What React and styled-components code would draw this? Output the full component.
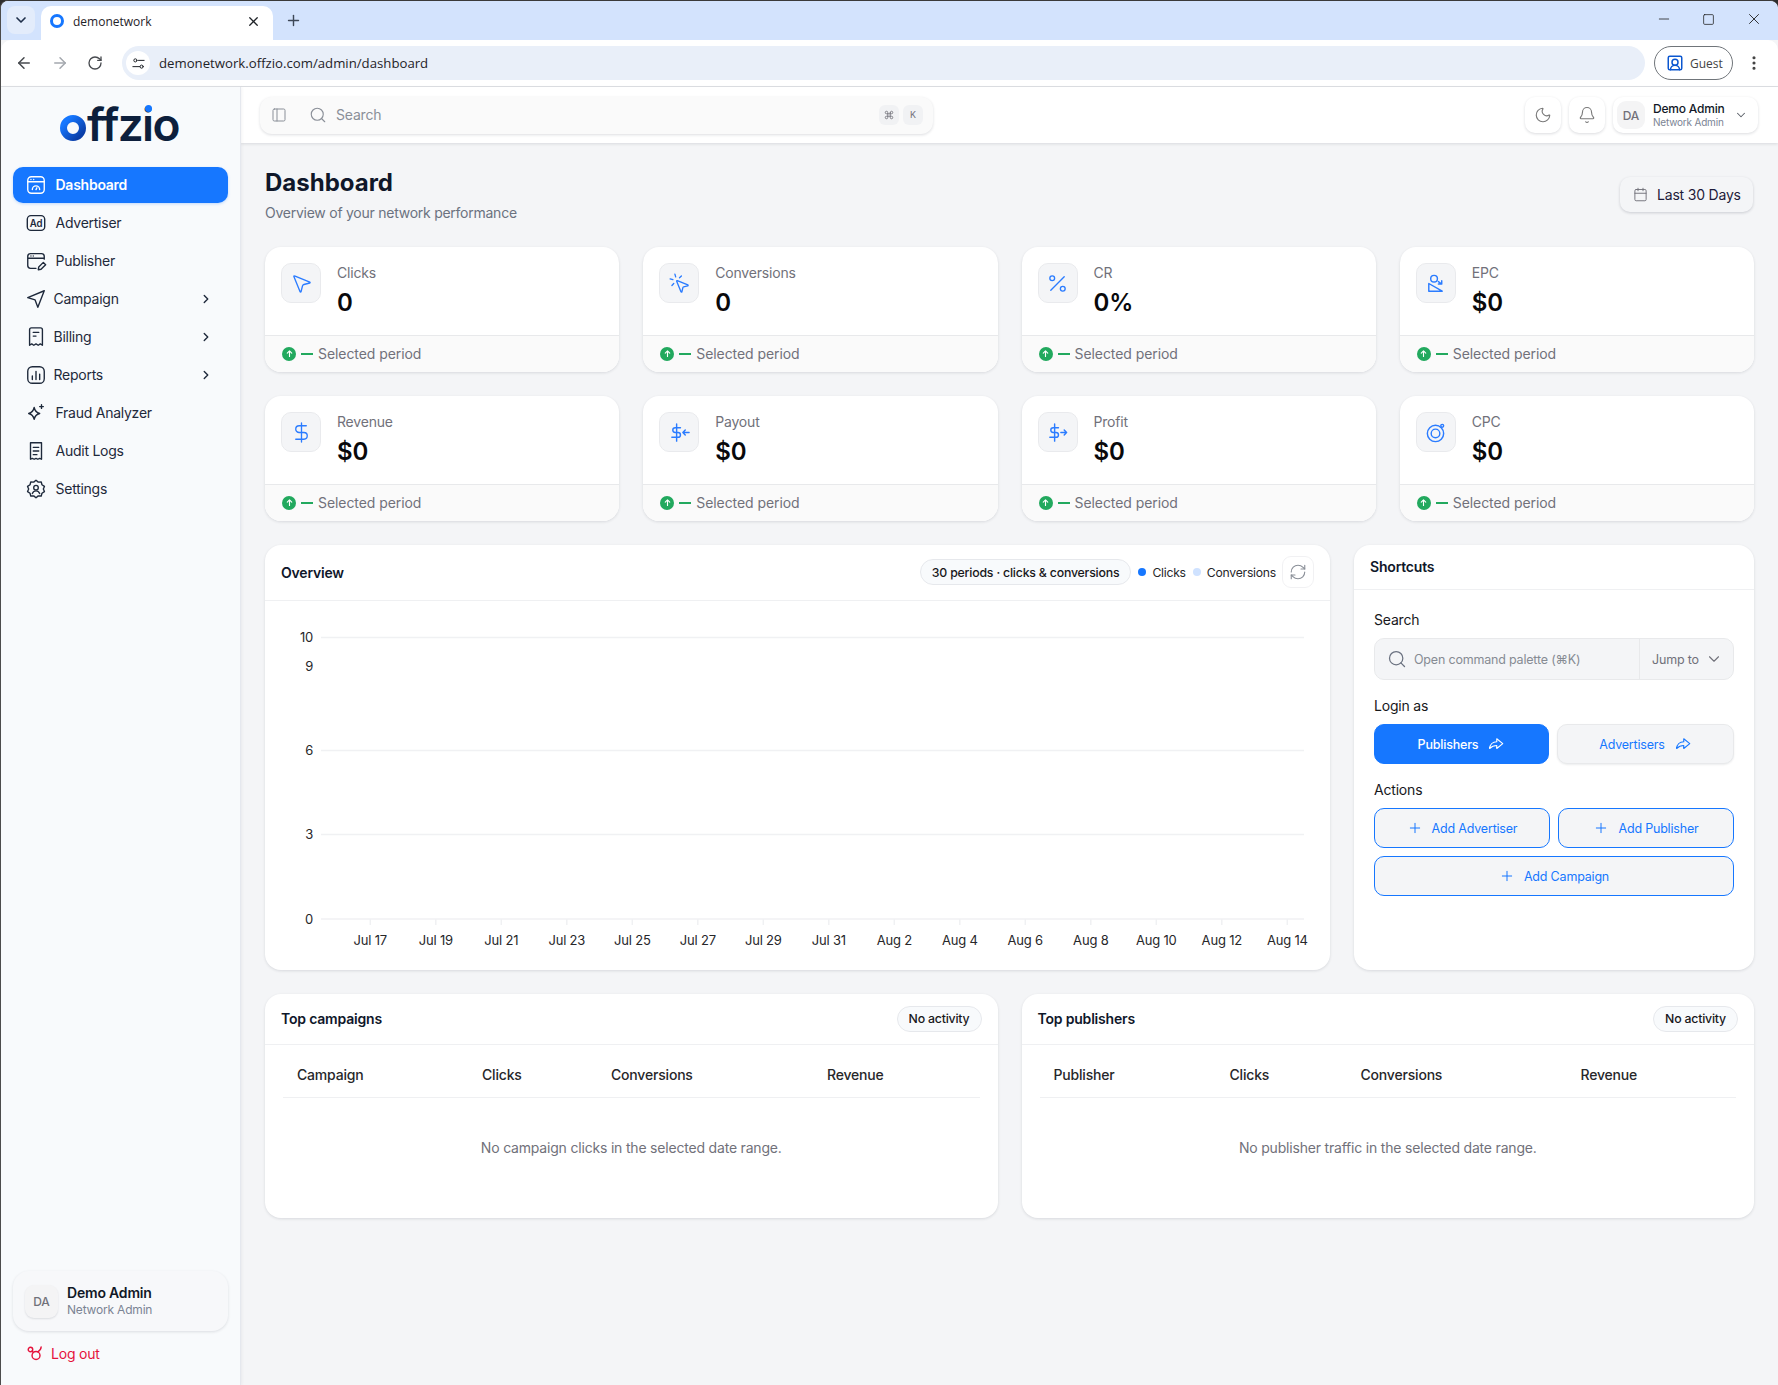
import React from "react";
import styled, { createGlobalStyle } from "styled-components";
import {
  ArrowLeft, ArrowRight, Bell, Calendar, ChevronDown, ChevronRight, Command, DollarSign,
  EllipsisVertical, Minus, MousePointer2, MousePointerClick, Moon, PanelLeft, Percent,
  Plus, RefreshCw, RotateCw, Search, Square, UserSquare2, X,
} from "lucide-react";

const Global = createGlobalStyle`
  html, body { margin: 0; padding: 0; background: #2e2e2e; }
  body { font-family: Inter, "Liberation Sans", sans-serif; color: #0f172a; letter-spacing: -0.012em; }
  * { box-sizing: border-box; }
`;

const Icon = ({ size = 20, width = 1.5, children }) => (
  <svg width={size} height={size} viewBox="0 0 24 24" fill="none" stroke="currentColor" strokeWidth={width} strokeLinecap="round" strokeLinejoin="round">
    {children}
  </svg>
);

const DashIcon = () => <Icon><rect x="3" y="3" width="18" height="18" rx="4" /><path d="M3 8.5h18M6.5 6h.01M9.5 6h.01M8 17a4 4 0 0 1 8 0M12 17l1-2" /></Icon>;
const AdIcon = () => (
  <Icon>
    <rect x="2.5" y="4" width="19" height="16" rx="4" />
    <text x="12" y="16" textAnchor="middle" fontSize="10.5" fontWeight="600" fill="currentColor" stroke="none" fontFamily="Inter, sans-serif">Ad</text>
  </Icon>
);
const PubIcon = () => <Icon><path d="M21 10V7a3 3 0 0 0-3-3H6a3 3 0 0 0-3 3v10a3 3 0 0 0 3 3h6M3 9h18M6.5 6.5h.01M9 6.500h.01M14.500 21.500l.5-3 5-5 2.500 2.500-5 5z" /></Icon>;
const PlaneIcon = () => <Icon><path d="M21 3 3 10.500l8 2.500 3 8z" /></Icon>;
const BillIcon = () => <Icon><path d="M5 4a2 2 0 0 1 2-2h10a2 2 0 0 1 2 2v17l-2.300-1.500-2.300 1.500-2.400-1.500-2.400 1.500-2.300-1.500L5 21zM9 7h6M9 11h3" /></Icon>;
const ChartIcon = () => <Icon><rect x="3" y="3" width="18" height="18" rx="5" /><path d="M8 17v-4M12 17V8M16 17v-6" /></Icon>;
const SparkIcon = () => <Icon><path d="M10 6c.8 4 2 5.500 6 6.500-4 1-5.200 2.500-6 6.500-.8-4-2-5.500-6-6.500 4-1 5.200-2.500 6-6.500zM18 3v4M16 5h4" /></Icon>;
const LogIcon = () => <Icon><path d="M6 3h12v18l-2-1-2 1-2-1-2 1-2-1-2 1zM9 8h6M9 12h6M9 16h4" /></Icon>;
const GearIcon = () => <Icon><path d="m12 2.500 2.500 2 3.200-.2.8 3.100 2.700 1.800-1.200 2.800 1.200 2.800-2.700 1.800-.8 3.100-3.200-.2-2.500 2-2.500-2-3.200.2-.8-3.100-2.700-1.800 1.200-2.800-1.200-2.800 2.700-1.800.8-3.100 3.200.2zM8 17c.8-2 2.200-3 4-3s3.200 1 4 3" /><circle cx="12" cy="10.500" r="2.500" /></Icon>;
const LogoutIcon = () => <Icon size={18} width={1.9}><circle cx="7.300" cy="7.300" r="3" /><circle cx="14.700" cy="15.300" r="5.300" /><path d="m9.500 9.500 1.800 1.800M21.500 4c-.2 3-1.800 5-4.300 6.500" /></Icon>;
const EpcIcon = () => <Icon><circle cx="10.500" cy="7" r="3.500" /><path d="M5 12v8h14L5 12zM15 10l3.500 2.500M18.500 9v3.500H15" /></Icon>;
const PayoutIcon = () => <Icon><path d="M9 3v18M13 7H7.500a2.500 2.500 0 0 0 0 5h3a2.500 2.500 0 0 1 0 5H4M22 12h-6M18 9.500 15.500 12l2.500 2.500" /></Icon>;
const ProfitIcon = () => <Icon><path d="M9 3v18M13 7H7.500a2.500 2.500 0 0 0 0 5h3a2.500 2.500 0 0 1 0 5H4M15.500 12h6M19 9.500l2.500 2.500-2.500 2.500" /></Icon>;
const CpcIcon = () => <Icon><circle cx="12" cy="13" r="8.500" /><circle cx="12" cy="13" r="4.500" /><circle cx="19" cy="5" r="1.500" /></Icon>;
const ForwardIcon = () => <Icon size={18}><path d="m13 5 8 6.500-8 6.500v-4c-4 0-7 1.500-9.500 4 .5-5 4-9 9.500-9z" /></Icon>;
const TuneIcon = () => <Icon size={15} width={1.6}><circle cx="7" cy="7" r="2.500" /><circle cx="17" cy="17" r="2.500" /><path d="M12 7h9M3 17h11" /></Icon>;
const LogoRing = () => (
  <svg width="26" height="26" viewBox="0 0 26 26" fill="none">
    <defs>
      <linearGradient id="logoRing" x1="0" y1="0" x2="1" y2="1">
        <stop offset="0.15" stopColor="#1677ff" />
        <stop offset="0.9" stopColor="#0a3ea8" />
      </linearGradient>
    </defs>
    <circle cx="13" cy="13" r="9.500" stroke="url(#logoRing)" strokeWidth="7" />
  </svg>
);

const Window = styled.div`
  width: 100%;
  height: 100vh;
  display: flex;
  flex-direction: column;
  border-top: 1px solid #3a3a3a;
  border-left: 1px solid #4c4c4c;
  border-radius: 8px 8px 0 0;
  overflow: hidden;
  background: #f4f5f7;
`;

const Strip = styled.div`
  height: 39px;
  flex: none;
  background: #d3e3fd;
  display: flex;
  align-items: flex-end;
  padding-left: 6px;
  font-family: "Open Sans", sans-serif;
  letter-spacing: 0;
`;

const TabMenu = styled.div`
  width: 28px;
  height: 28px;
  margin-bottom: 6px;
  border-radius: 8px;
  background: #e3ecfb;
  display: flex;
  align-items: center;
  justify-content: center;
  color: #1f2f4a;
`;

const Tab = styled.div`
  width: 232px;
  height: 34px;
  margin-left: 6px;
  padding: 0 12px 4px 9px;
  background: #fff;
  border-radius: 10px 10px 0 0;
  display: flex;
  align-items: center;
  gap: 9px;
  font-size: 12px;
  color: #1f2328;
  span { flex: 1; }
`;

const Favicon = styled.i`
  width: 14px;
  height: 14px;
  border-radius: 50%;
  border: 3.500px solid #1677ff;
`;

const NewTab = styled.div`
  margin: 0 0 11px 12px;
  color: #3d4757;
  display: flex;
`;

const WinControls = styled.div`
  margin-left: auto;
  height: 100%;
  display: flex;
  align-items: center;
  color: #1f1f1f;
  gap: 30px;
  padding: 0 15px 3px 0;
  svg { display: block; }
`;

const Toolbar = styled.div`
  height: 47px;
  flex: none;
  background: #fff;
  border-bottom: 1px solid #dfe1e5;
  border-radius: 10px 10px 0 0;
  display: flex;
  align-items: center;
  padding: 0 15px 0 14px;
  font-family: "Open Sans", sans-serif;
  letter-spacing: 0;
`;

const NavBtn = styled.div`
  width: 36px;
  display: flex;
  color: ${(p) => (p.$off ? "#a4a8ae" : "#474a4f")};
`;

const Address = styled.div`
  flex: 1;
  height: 34px;
  margin-left: -1px;
  border-radius: 17px;
  background: #e9eff9;
  display: flex;
  align-items: center;
  padding-left: 4px;
  font-size: 13.200px;
  color: #1f2328;
`;

const SiteBtn = styled.div`
  width: 24px;
  height: 24px;
  border-radius: 50%;
  background: #fff;
  display: flex;
  align-items: center;
  justify-content: center;
  margin-right: 9px;
`;

const Guest = styled.div`
  width: 79px;
  height: 34px;
  margin-left: 9px;
  border: 1px solid #70757a;
  border-radius: 17px;
  display: flex;
  align-items: center;
  gap: 6px;
  padding-left: 11px;
  font-size: 12px;
  color: #444;
  svg { color: #0b57d0; }
`;

const Dots = styled.div`
  margin: 0 0 0 12px;
  display: flex;
  color: #444;
`;

const Body = styled.div`
  flex: 1;
  min-height: 0;
  display: flex;
`;

const Sidebar = styled.aside`
  width: 240px;
  flex: none;
  background: #f8fafc;
  border-right: 1px solid #e5e8ee;
  box-shadow: 1px 0 3px rgba(15, 23, 42, 0.05);
  display: flex;
  flex-direction: column;
  padding: 0 12px 19px;
  z-index: 2;
`;

const LogoWrap = styled.div`
  height: 80px;
  flex: none;
  display: flex;
  align-items: center;
  justify-content: center;
`;

const Logo = styled.div`
  position: relative;
  display: flex;
  align-items: baseline;
  gap: 1px;
  margin: -6px 0 0 -2px;
  font-size: 46px;
  line-height: 36px;
  font-weight: 600;
  letter-spacing: -0.035em;
  color: #0d1f3c;
  svg { flex: none; }
  i {
    position: absolute;
    right: 27px;
    top: -1px;
    width: 7px;
    height: 7px;
    border-radius: 50%;
    background: #1677ff;
  }
`;

const Nav = styled.nav`
  display: flex;
  flex-direction: column;
  gap: 2px;
`;

const NavItem = styled.div`
  height: 36px;
  border-radius: 10px;
  padding: 0 12px 1px;
  display: flex;
  align-items: center;
  gap: ${(p) => (p.$sub ? "6.500px" : "8.500px")};
  font-size: 14px;
  letter-spacing: -0.018em;
  font-weight: ${(p) => (p.$active ? 600 : 400)};
  background: ${(p) => (p.$active ? "#1677ff" : "transparent")};
  color: ${(p) => (p.$active ? "#fff" : "#1e293b")};
  box-shadow: ${(p) => (p.$active ? "0 1px 3px rgba(22,119,255,0.25)" : "none")};
  > svg:first-child { width: 22px; height: 22px; }
  > svg:last-child:not(:first-child) { margin-left: auto; margin-right: 3px; }
`;

const UserCard = styled.div`
  margin-top: auto;
  height: 60px;
  border-radius: 16px;
  background: #f7f8fa;
  box-shadow: 0 1px 3px rgba(15, 23, 42, 0.12);
  display: flex;
  align-items: center;
  gap: 9px;
  padding: 0 12px;
`;

const Avatar = styled.div`
  width: ${(p) => p.$size}px;
  height: ${(p) => p.$size}px;
  flex: none;
  border-radius: 9px;
  background: #f4f4f5;
  box-shadow: ${(p) => (p.$raised ? "0 1px 2px rgba(15,23,42,.12)" : "none")};
  display: flex;
  align-items: center;
  justify-content: center;
  font-size: 12px;
  font-weight: 500;
  color: #71717a;
`;

const UserName = styled.div`
  font-size: ${(p) => p.$size}px;
  line-height: 1.3;
  font-weight: ${(p) => (p.$bold ? 600 : 500)};
  color: #111827;
`;

const UserRole = styled.div`
  font-size: ${(p) => p.$size}px;
  line-height: 1.3;
  color: #7b8494;
`;

const Logout = styled.div`
  margin-top: 9px;
  height: 26px;
  padding-left: 12px;
  display: flex;
  align-items: center;
  gap: 8px;
  font-size: 14px;
  color: #e5133c;
`;

const Main = styled.main`
  flex: 1;
  min-width: 0;
  display: flex;
  flex-direction: column;
`;

const Topbar = styled.header`
  height: 56px;
  flex: none;
  background: #fff;
  box-shadow: 0 1px 3px rgba(15, 23, 42, 0.12);
  display: flex;
  align-items: center;
  padding: 0 20px 0 19px;
  gap: 8px;
`;

const SearchBar = styled.div`
  width: 673px;
  height: 37px;
  margin-right: auto;
  border-radius: 12px;
  background: #fafafa;
  box-shadow: 0 1px 3px rgba(15, 23, 42, 0.14);
  display: flex;
  align-items: center;
  padding: 0 10px 1px 11px;
  color: #8a8f98;
  font-size: 14px;
  > svg:nth-child(2) { margin: 0 9px 0 22px; }
  span { flex: 1; }
`;

const Kbd = styled.kbd`
  width: 20px;
  height: 20px;
  margin-left: 4px;
  border-radius: 6px;
  background: #f1f2f4;
  display: flex;
  align-items: center;
  justify-content: center;
  font-family: Inter, sans-serif;
  font-size: 9px;
  color: #71717a;
`;

const IconBtn = styled.div`
  width: 36px;
  height: 36px;
  border-radius: 10px;
  background: #fff;
  box-shadow: 0 1px 3px rgba(15, 23, 42, 0.15);
  display: flex;
  align-items: center;
  justify-content: center;
  color: #7a7a7a;
`;

const UserMenu = styled.div`
  width: 145px;
  height: 36px;
  border-radius: 10px;
  background: #fff;
  box-shadow: 0 1px 3px rgba(15, 23, 42, 0.15);
  display: flex;
  align-items: center;
  padding: 0 10px 0 4px;
  gap: 8px;
  color: #5b6068;
  > svg { margin-left: auto; }
`;

const Content = styled.div`
  flex: 1;
  padding: 24px 24px 0;
  display: flex;
  flex-direction: column;
  gap: 24px;
`;

const PageHead = styled.div`
  display: flex;
  justify-content: space-between;
  align-items: flex-start;
`;

const Title = styled.h1`
  margin: 0 0 4px;
  font-size: 24px;
  line-height: 32px;
  font-weight: 700;
  letter-spacing: 0;
  color: #0f172a;
`;

const Sub = styled.p`
  margin: 0;
  font-size: 14px;
  line-height: 20px;
  letter-spacing: -0.018em;
  color: #6b7280;
`;

const RangeBtn = styled.div`
  width: 133px;
  height: 35px;
  margin: 10px 1px 0 0;
  border-radius: 10px;
  background: #f4f5f7;
  box-shadow: 0 1px 3px rgba(15, 23, 42, 0.18);
  display: flex;
  align-items: center;
  gap: 9px;
  padding-left: 13px;
  font-size: 14px;
  color: #1e1b3a;
  svg { color: #71717a; }
`;

const StatGrid = styled.section`
  display: grid;
  grid-template-columns: repeat(4, 1fr);
  gap: 24px;
`;

const Card = styled.div`
  background: #fff;
  border-radius: 16px;
  box-shadow: 0 1px 3px rgba(15, 23, 42, 0.12);
  overflow: hidden;
`;

const StatBody = styled.div`
  height: 88px;
  padding: 16px;
  display: flex;
  gap: 16px;
`;

const StatIcon = styled.div`
  width: 40px;
  height: 40px;
  border-radius: 10px;
  background: #f4f5f7;
  border: 1px solid #e9eaed;
  display: flex;
  align-items: center;
  justify-content: center;
  color: #2b7cff;
  svg { width: 23px; height: 23px; }
`;

const StatLabel = styled.div`
  font-size: 14px;
  line-height: 20px;
  color: #71717a;
`;

const StatValue = styled.div`
  margin-top: 4px;
  font-size: 24px;
  line-height: 32px;
  font-weight: 600;
  letter-spacing: 0;
  color: #09090b;
`;

const StatFoot = styled.div`
  height: 37px;
  border-top: 1px solid #e8e9eb;
  background: #fafafa;
  padding: 0 17px 1px;
  display: flex;
  align-items: center;
  font-size: 14px;
  letter-spacing: -0.005em;
  color: #71717a;
`;

const UpDot = styled.i`
  width: 14px;
  height: 14px;
  border-radius: 50%;
  background: #22a95e;
  color: #fff;
  display: flex;
  align-items: center;
  justify-content: center;
`;

const Dash = styled.i`
  width: 12px;
  height: 2px;
  margin: 0 5px 0 5px;
  background: #22a95e;
`;

const MidRow = styled.section`
  display: grid;
  grid-template-columns: 1fr 400px;
  gap: 24px;
`;

const CardHead = styled.div`
  height: ${(p) => p.$h}px;
  border-bottom: 1px solid #eff0f2;
  padding: 0 16px 1px;
  display: flex;
  align-items: center;
  gap: 7px;
`;

const CardTitle = styled.h2`
  margin: 0 auto 0 0;
  font-size: 14px;
  font-weight: 600;
  color: #0f172a;
`;

const Pill = styled.div`
  height: 26px;
  padding: 0 11px;
  border: 1px solid #e6e8ec;
  border-radius: 13px;
  background: #f8fafc;
  display: flex;
  align-items: center;
  font-size: 12.300px;
  font-weight: 450;
  color: #18181b;
`;

const Legend = styled.div`
  display: flex;
  align-items: center;
  gap: 6px;
  font-size: 12.200px;
  letter-spacing: -0.02em;
  color: #27272a;
  &::before {
    content: "";
    width: 8px;
    height: 8px;
    border-radius: 50%;
    background: ${(p) => p.$color};
  }
`;

const RefreshBtn = styled.div`
  width: 32px;
  height: 32px;
  margin-left: -1px;
  border: 1px solid #f1f1f3;
  border-radius: 9px;
  display: flex;
  align-items: center;
  justify-content: center;
  color: #8a8f98;
`;

const ChartSvg = styled.svg`
  display: block;
  width: 100%;
  height: 369px;
  text {
    font-family: Inter, sans-serif;
    font-size: 13px;
    fill: #27272a;
  }
`;

const ShortcutsBody = styled.div`
  padding: 20px;
  display: flex;
  flex-direction: column;
  gap: 16px;
`;

const Field = styled.div`
  display: flex;
  flex-direction: column;
  gap: 8px;
`;

const FieldLabel = styled.div`
  font-size: 14px;
  line-height: 20px;
  color: #18181b;
`;

const PaletteBox = styled.div`
  height: 42px;
  border: 1px solid #e8e9eb;
  border-radius: 10px;
  background: #f4f5f7;
  display: flex;
  align-items: center;
  font-size: 12.500px;
  color: #868b93;
`;

const PaletteInput = styled.div`
  flex: 1;
  height: 100%;
  padding-left: 12px;
  display: flex;
  align-items: center;
  gap: 7px;
  border-right: 1px solid #e8e9eb;
  color: #868b93;
  > svg { color: #6b7280; }
`;

const JumpTo = styled.div`
  width: 93px;
  display: flex;
  align-items: center;
  gap: 6px;
  padding-left: 12px;
  color: #71717a;
`;

const Btns = styled.div`
  display: grid;
  grid-template-columns: ${(p) => p.$cols || "1fr 1fr"};
  gap: 8px;
`;

const Btn = styled.div`
  height: 40px;
  border-radius: 10px;
  display: flex;
  align-items: center;
  justify-content: center;
  gap: 9px;
  font-size: 12.500px;
  font-weight: ${(p) => (p.$solid ? 500 : 400)};
  color: ${(p) => (p.$solid ? "#fff" : "#1677ff")};
  background: ${(p) => (p.$solid ? "#1677ff" : "#f4f5f7")};
  border: 1px solid ${(p) => (p.$solid ? "#1677ff" : p.$outline ? "#1677ff" : "#e8e9eb")};
  box-shadow: ${(p) => (p.$outline || p.$solid ? "none" : "0 1px 2px rgba(15,23,42,.08)")};
  grid-column: ${(p) => (p.$wide ? "1 / -1" : "auto")};
`;

const BottomRow = styled.section`
  display: grid;
  grid-template-columns: 1fr 1fr;
  gap: 24px;
`;

const TableBody = styled.div`
  padding: 8px 18px 20px;
`;

const TableHead = styled.div`
  height: 45px;
  padding-bottom: 1px;
  border-bottom: 1px solid #eff0f2;
  display: grid;
  grid-template-columns: ${(p) => p.$cols};
  align-items: center;
  font-size: 14px;
  font-weight: 450;
  color: #27272a;
  span { padding-left: 14px; }
`;

const Empty = styled.div`
  height: 100px;
  padding-bottom: 1px;
  display: flex;
  align-items: center;
  justify-content: center;
  font-size: 14px;
  color: #71717a;
`;

const navItems = [
  { label: "Dashboard", icon: <DashIcon />, active: true },
  { label: "Advertiser", icon: <AdIcon /> },
  { label: "Publisher", icon: <PubIcon /> },
  { label: "Campaign", icon: <PlaneIcon />, sub: true },
  { label: "Billing", icon: <BillIcon />, sub: true },
  { label: "Reports", icon: <ChartIcon />, sub: true },
  { label: "Fraud Analyzer", icon: <SparkIcon /> },
  { label: "Audit Logs", icon: <LogIcon /> },
  { label: "Settings", icon: <GearIcon /> },
];

const stats = [
  { label: "Clicks", value: "0", icon: <MousePointer2 size={20} strokeWidth={1.4} /> },
  { label: "Conversions", value: "0", icon: <MousePointerClick size={20} strokeWidth={1.4} /> },
  { label: "CR", value: "0%", icon: <Percent size={20} strokeWidth={1.4} /> },
  { label: "EPC", value: "$0", icon: <EpcIcon /> },
  { label: "Revenue", value: "$0", icon: <DollarSign size={20} strokeWidth={1.4} /> },
  { label: "Payout", value: "$0", icon: <PayoutIcon /> },
  { label: "Profit", value: "$0", icon: <ProfitIcon /> },
  { label: "CPC", value: "$0", icon: <CpcIcon /> },
];

const ticks = ["Jul 17", "Jul 19", "Jul 21", "Jul 23", "Jul 25", "Jul 27", "Jul 29", "Jul 31", "Aug 2", "Aug 4", "Aug 6", "Aug 8", "Aug 10", "Aug 12", "Aug 14"];
const yLabels = [
  { v: 10, y: 36.5, line: true },
  { v: 9, y: 65 },
  { v: 6, y: 149.5, line: true },
  { v: 3, y: 233.5, line: true },
  { v: 0, y: 318, line: true },
];

function Chart() {
  return (
    <ChartSvg viewBox="0 0 1065 369">
      {yLabels.map((l) => (
        <g key={l.v}>
          {l.line && <line x1="56" x2="1039" y1={l.y} y2={l.y} stroke="#f0f1f3" strokeWidth="1.5" />}
          <text x="48" y={l.y + 4.5} textAnchor="end">{l.v}</text>
        </g>
      ))}
      {ticks.map((t, i) => {
        const x = 105.3 + i * 65.5;
        return (
          <g key={t}>
            <line x1={x} x2={x} y1="318" y2="324" stroke="#f0f1f3" strokeWidth="1.5" />
            <text x={x} y="344" textAnchor="middle">{t}</text>
          </g>
        );
      })}
    </ChartSvg>
  );
}

function TopTable({ title, cols, first, empty }) {
  return (
    <Card>
      <CardHead $h={51}>
        <CardTitle>{title}</CardTitle>
        <Pill>No activity</Pill>
      </CardHead>
      <TableBody>
        <TableHead $cols={cols}>
          <span>{first}</span>
          <span>Clicks</span>
          <span>Conversions</span>
          <span>Revenue</span>
        </TableHead>
        <Empty>{empty}</Empty>
      </TableBody>
    </Card>
  );
}

export default function App() {
  return (
    <Window>
      <Global />
      <Strip>
        <TabMenu><ChevronDown size={16} strokeWidth={2.5} /></TabMenu>
        <Tab>
          <Favicon />
          <span>demonetwork</span>
          <X size={15} strokeWidth={2} />
        </Tab>
        <NewTab><Plus size={17} strokeWidth={2} /></NewTab>
        <WinControls>
          <Minus size={16} strokeWidth={1.2} />
          <Square size={13} strokeWidth={1.4} />
          <X size={18} strokeWidth={1.2} />
        </WinControls>
      </Strip>
      <Toolbar>
        <NavBtn><ArrowLeft size={18} strokeWidth={2} /></NavBtn>
        <NavBtn $off><ArrowRight size={18} strokeWidth={2} /></NavBtn>
        <NavBtn><RotateCw size={16} strokeWidth={2} /></NavBtn>
        <Address>
          <SiteBtn><TuneIcon /></SiteBtn>
          demonetwork.offzio.com/admin/dashboard
        </Address>
        <Guest><UserSquare2 size={18} strokeWidth={2} />Guest</Guest>
        <Dots><EllipsisVertical size={18} strokeWidth={2.2} /></Dots>
      </Toolbar>
      <Body>
        <Sidebar>
          <LogoWrap>
            <Logo aria-label="offzio"><LogoRing /><span>ffzio</span><i /></Logo>
          </LogoWrap>
          <Nav>
            {navItems.map((n) => (
              <NavItem key={n.label} $active={n.active} $sub={n.sub}>
                {n.icon}
                {n.label}
                {n.sub && <ChevronRight size={14} strokeWidth={2.4} />}
              </NavItem>
            ))}
          </Nav>
          <UserCard>
            <Avatar $size={33} $raised>DA</Avatar>
            <div>
              <UserName $size={14} $bold>Demo Admin</UserName>
              <UserRole $size={12}>Network Admin</UserRole>
            </div>
          </UserCard>
          <Logout><LogoutIcon />Log out</Logout>
        </Sidebar>
        <Main>
          <Topbar>
            <SearchBar>
              <PanelLeft size={16} strokeWidth={1.5} />
              <Search size={18} strokeWidth={1.5} />
              <span>Search</span>
              <Kbd><Command size={10} /></Kbd>
              <Kbd>K</Kbd>
            </SearchBar>
            <IconBtn><Moon size={18} strokeWidth={1.5} /></IconBtn>
            <IconBtn><Bell size={18} strokeWidth={1.5} /></IconBtn>
            <UserMenu>
              <Avatar $size={28}>DA</Avatar>
              <div>
                <UserName $size={12}>Demo Admin</UserName>
                <UserRole $size={10}>Network Admin</UserRole>
              </div>
              <ChevronDown size={14} strokeWidth={1.8} />
            </UserMenu>
          </Topbar>
          <Content>
            <PageHead>
              <div>
                <Title>Dashboard</Title>
                <Sub>Overview of your network performance</Sub>
              </div>
              <RangeBtn><Calendar size={15} strokeWidth={1.5} />Last 30 Days</RangeBtn>
            </PageHead>
            <StatGrid>
              {stats.map((s) => (
                <Card key={s.label}>
                  <StatBody>
                    <StatIcon>{s.icon}</StatIcon>
                    <div>
                      <StatLabel>{s.label}</StatLabel>
                      <StatValue>{s.value}</StatValue>
                    </div>
                  </StatBody>
                  <StatFoot>
                    <UpDot><Icon size={9} width={3}><path d="M12 20V5M6 11l6-6 6 6" /></Icon></UpDot>
                    <Dash />
                    Selected period
                  </StatFoot>
                </Card>
              ))}
            </StatGrid>
            <MidRow>
              <Card>
                <CardHead $h={56}>
                  <CardTitle>Overview</CardTitle>
                  <Pill>30 periods · clicks &amp; conversions</Pill>
                  <Legend $color="#1677ff">Clicks</Legend>
                  <Legend $color="#cfe2ff">Conversions</Legend>
                  <RefreshBtn><RefreshCw size={18} strokeWidth={1.5} /></RefreshBtn>
                </CardHead>
                <Chart />
              </Card>
              <Card>
                <CardHead $h={45}><CardTitle>Shortcuts</CardTitle></CardHead>
                <ShortcutsBody>
                  <Field>
                    <FieldLabel>Search</FieldLabel>
                    <PaletteBox>
                      <PaletteInput>
                        <Search size={20} strokeWidth={1.5} />
                        Open command palette (⌘K)
                      </PaletteInput>
                      <JumpTo>Jump to <ChevronDown size={18} strokeWidth={1.5} /></JumpTo>
                    </PaletteBox>
                  </Field>
                  <Field>
                    <FieldLabel>Login as</FieldLabel>
                    <Btns $cols="175px 1fr">
                      <Btn $solid>Publishers <ForwardIcon /></Btn>
                      <Btn>Advertisers <ForwardIcon /></Btn>
                    </Btns>
                  </Field>
                  <Field>
                    <FieldLabel>Actions</FieldLabel>
                    <Btns>
                      <Btn $outline><Plus size={16} strokeWidth={1.5} />Add Advertiser</Btn>
                      <Btn $outline><Plus size={16} strokeWidth={1.5} />Add Publisher</Btn>
                      <Btn $outline $wide><Plus size={16} strokeWidth={1.5} />Add Campaign</Btn>
                    </Btns>
                  </Field>
                </ShortcutsBody>
              </Card>
            </MidRow>
            <BottomRow>
              <TopTable title="Top campaigns" first="Campaign" cols="185px 129px 216px 1fr" empty="No campaign clicks in the selected date range." />
              <TopTable title="Top publishers" first="Publisher" cols="176px 131px 220px 1fr" empty="No publisher traffic in the selected date range." />
            </BottomRow>
          </Content>
        </Main>
      </Body>
    </Window>
  );
}
